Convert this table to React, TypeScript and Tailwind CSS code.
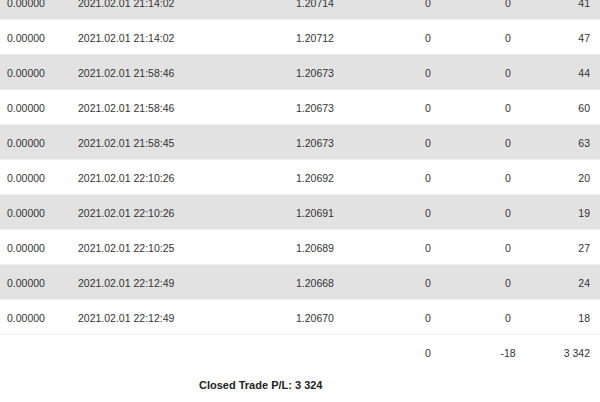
const rows = [
  ["0.00000", "2021.02.01 21:14:02", "1.20714", "0", "0", "41"],
  ["0.00000", "2021.02.01 21:14:02", "1.20712", "0", "0", "47"],
  ["0.00000", "2021.02.01 21:58:46", "1.20673", "0", "0", "44"],
  ["0.00000", "2021.02.01 21:58:46", "1.20673", "0", "0", "60"],
  ["0.00000", "2021.02.01 21:58:45", "1.20673", "0", "0", "63"],
  ["0.00000", "2021.02.01 22:10:26", "1.20692", "0", "0", "20"],
  ["0.00000", "2021.02.01 22:10:26", "1.20691", "0", "0", "19"],
  ["0.00000", "2021.02.01 22:10:25", "1.20689", "0", "0", "27"],
  ["0.00000", "2021.02.01 22:12:49", "1.20668", "0", "0", "24"],
  ["0.00000", "2021.02.01 22:12:49", "1.20670", "0", "0", "18"],
];

function Row({ cells, gray }: { cells: string[]; gray?: boolean }) {
  return (
    <div
      className={`flex h-[35px] items-center border-t border-[#efefef] pt-[3px] ${gray ? "bg-[#e2e2e2]" : "bg-white"}`}
    >
      <div className="w-[78px] pl-[7px]">{cells[0]}</div>
      <div className="w-[218px]">{cells[1]}</div>
      <div className="w-[100px]">{cells[2]}</div>
      <div className="w-[64px] text-center">{cells[3]}</div>
      <div className="w-[96px] text-center">{cells[4]}</div>
      <div className="flex-1 pr-[10px] text-right">{cells[5]}</div>
    </div>
  );
}

export default function App() {
  return (
    <div className="h-[402px] w-[600px] overflow-hidden bg-white font-['Liberation_Sans',Arial,sans-serif] text-[10.5px] text-[#333333]">
      <div className="-mt-[16px]">
        {rows.map((r, i) => (
          <Row key={i} cells={r} gray={i % 2 === 0} />
        ))}
        <Row cells={["", "", "", "0", "-18", "3 342"]} />
      </div>
      <div className="pl-[199px] pt-[8px] text-[11px] font-bold text-[#222222]">
        Closed Trade P/L: 3 324
      </div>
    </div>
  );
}
